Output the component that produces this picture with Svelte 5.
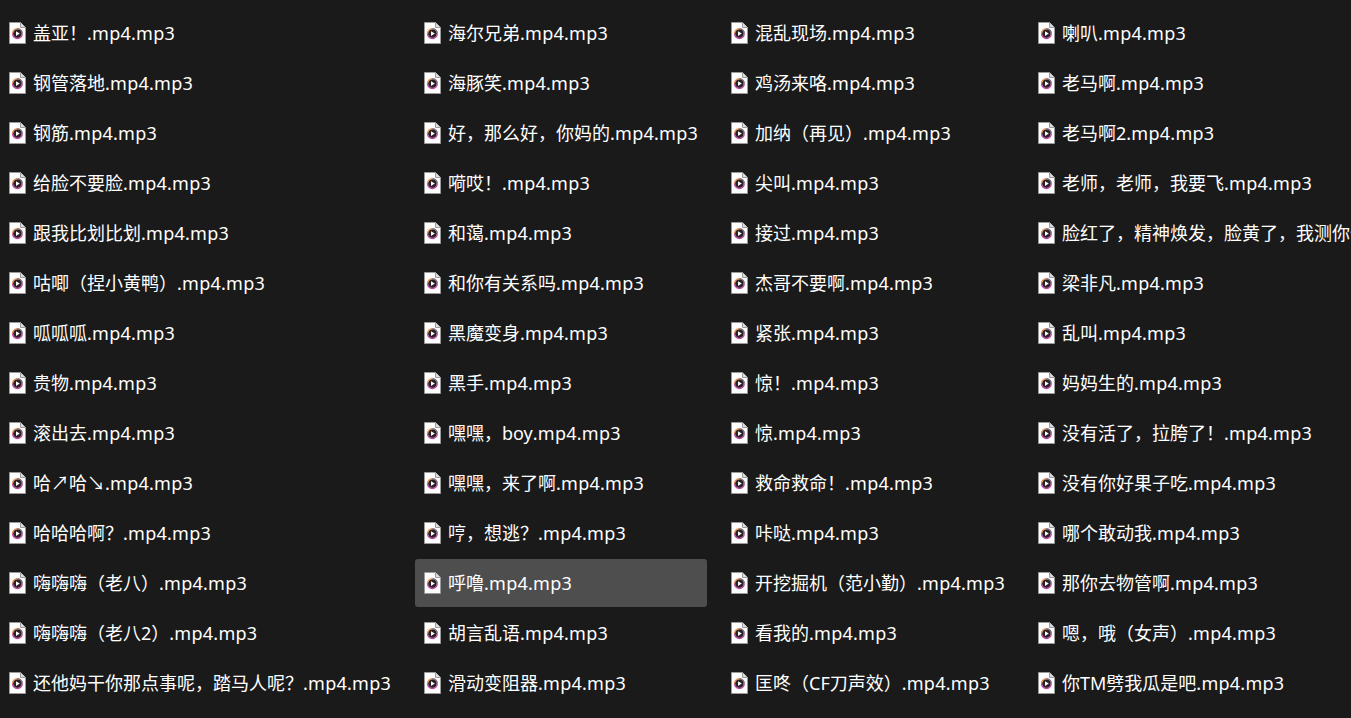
<script>
  const columns = [
    ["盖亚！", "钢管落地", "钢筋", "给脸不要脸", "跟我比划比划", "咕唧（捏小黄鸭）", "呱呱呱", "贵物", "滚出去", "哈↗哈↘", "哈哈哈啊？", "嗨嗨嗨（老八）", "嗨嗨嗨（老八2）", "还他妈干你那点事呢，踏马人呢？"],
    ["海尔兄弟", "海豚笑", "好，那么好，你妈的", "嗬哎！", "和蔼", "和你有关系吗", "黑魔变身", "黑手", "嘿嘿，boy", "嘿嘿，来了啊", "哼，想逃？", "呼噜", "胡言乱语", "滑动变阻器"],
    ["混乱现场", "鸡汤来咯", "加纳（再见）", "尖叫", "接过", "杰哥不要啊", "紧张", "惊！", "惊", "救命救命！", "咔哒", "开挖掘机（范小勤）", "看我的", "匡咚（CF刀声效）"],
    ["喇叭", "老马啊", "老马啊2", "老师，老师，我要飞", "脸红了，精神焕发，脸黄了，我测你们码", "梁非凡", "乱叫", "妈妈生的", "没有活了，拉胯了！", "没有你好果子吃", "哪个敢动我", "那你去物管啊", "嗯，哦（女声）", "你TM劈我瓜是吧"]
  ];
  const files = columns.flat();
  const active = "呼噜";
</script>

<div class="list">
  {#each files as file}
    <div class="item" class:active={file === active}>
      <svg class="icon" width="17" height="22" viewBox="0 0 17 22">
        <path d="M.5.5H11.5L16.5 5.5V21.5H.5Z" fill="#fdfdfd" stroke="#9a9a9a" />
        <path d="M11.5.5V5.5H16.5" fill="#dcdcdc" stroke="#9a9a9a" />
        <circle cx="8.4" cy="11.6" r="4.4" fill="#2b2228" />
        <path d="M3.5 11.6A4.9 4.9 0 0 1 8.4 6.7" fill="none" stroke="#ee8a3c" stroke-width="1.3" />
        <path d="M8.4 6.7A4.9 4.9 0 0 1 13.3 11.6" fill="none" stroke="#6a5a70" stroke-width="1.3" />
        <path d="M3.5 11.6A4.9 4.9 0 0 0 13.3 11.6" fill="none" stroke="#b9489e" stroke-width="1.3" />
        <path d="M7 9.2L10.8 11.6L7 14Z" fill="#fff" />
      </svg>
      <span class="name">{file}<span class="ext">.mp4.mp3</span></span>
    </div>
  {/each}
</div>

<style>
  :global(body) {
    background: #1a1a1a;
    overflow: hidden;
  }

  .list {
    display: grid;
    grid-auto-flow: column;
    grid-template-rows: repeat(14, 48px);
    grid-template-columns: 400px 292px 292px minmax(0, 1fr);
    column-gap: 15px;
    row-gap: 2px;
    padding-top: 9px;
    height: 709px;
    overflow: hidden;
    font-family: "Noto Sans", "Noto Sans CJK SC", sans-serif;
    font-size: 18px;
    color: #fff;
  }

  .item {
    display: flex;
    align-items: center;
    gap: 7px;
    padding-left: 9px;
    border-radius: 3px;
    white-space: nowrap;
    overflow: hidden;
  }

  .item.active {
    background: #4e4e4e;
  }

  .icon {
    flex: none;
  }

  .name {
    padding-bottom: 2px;
  }

  .ext {
    letter-spacing: 0.25px;
  }
</style>
